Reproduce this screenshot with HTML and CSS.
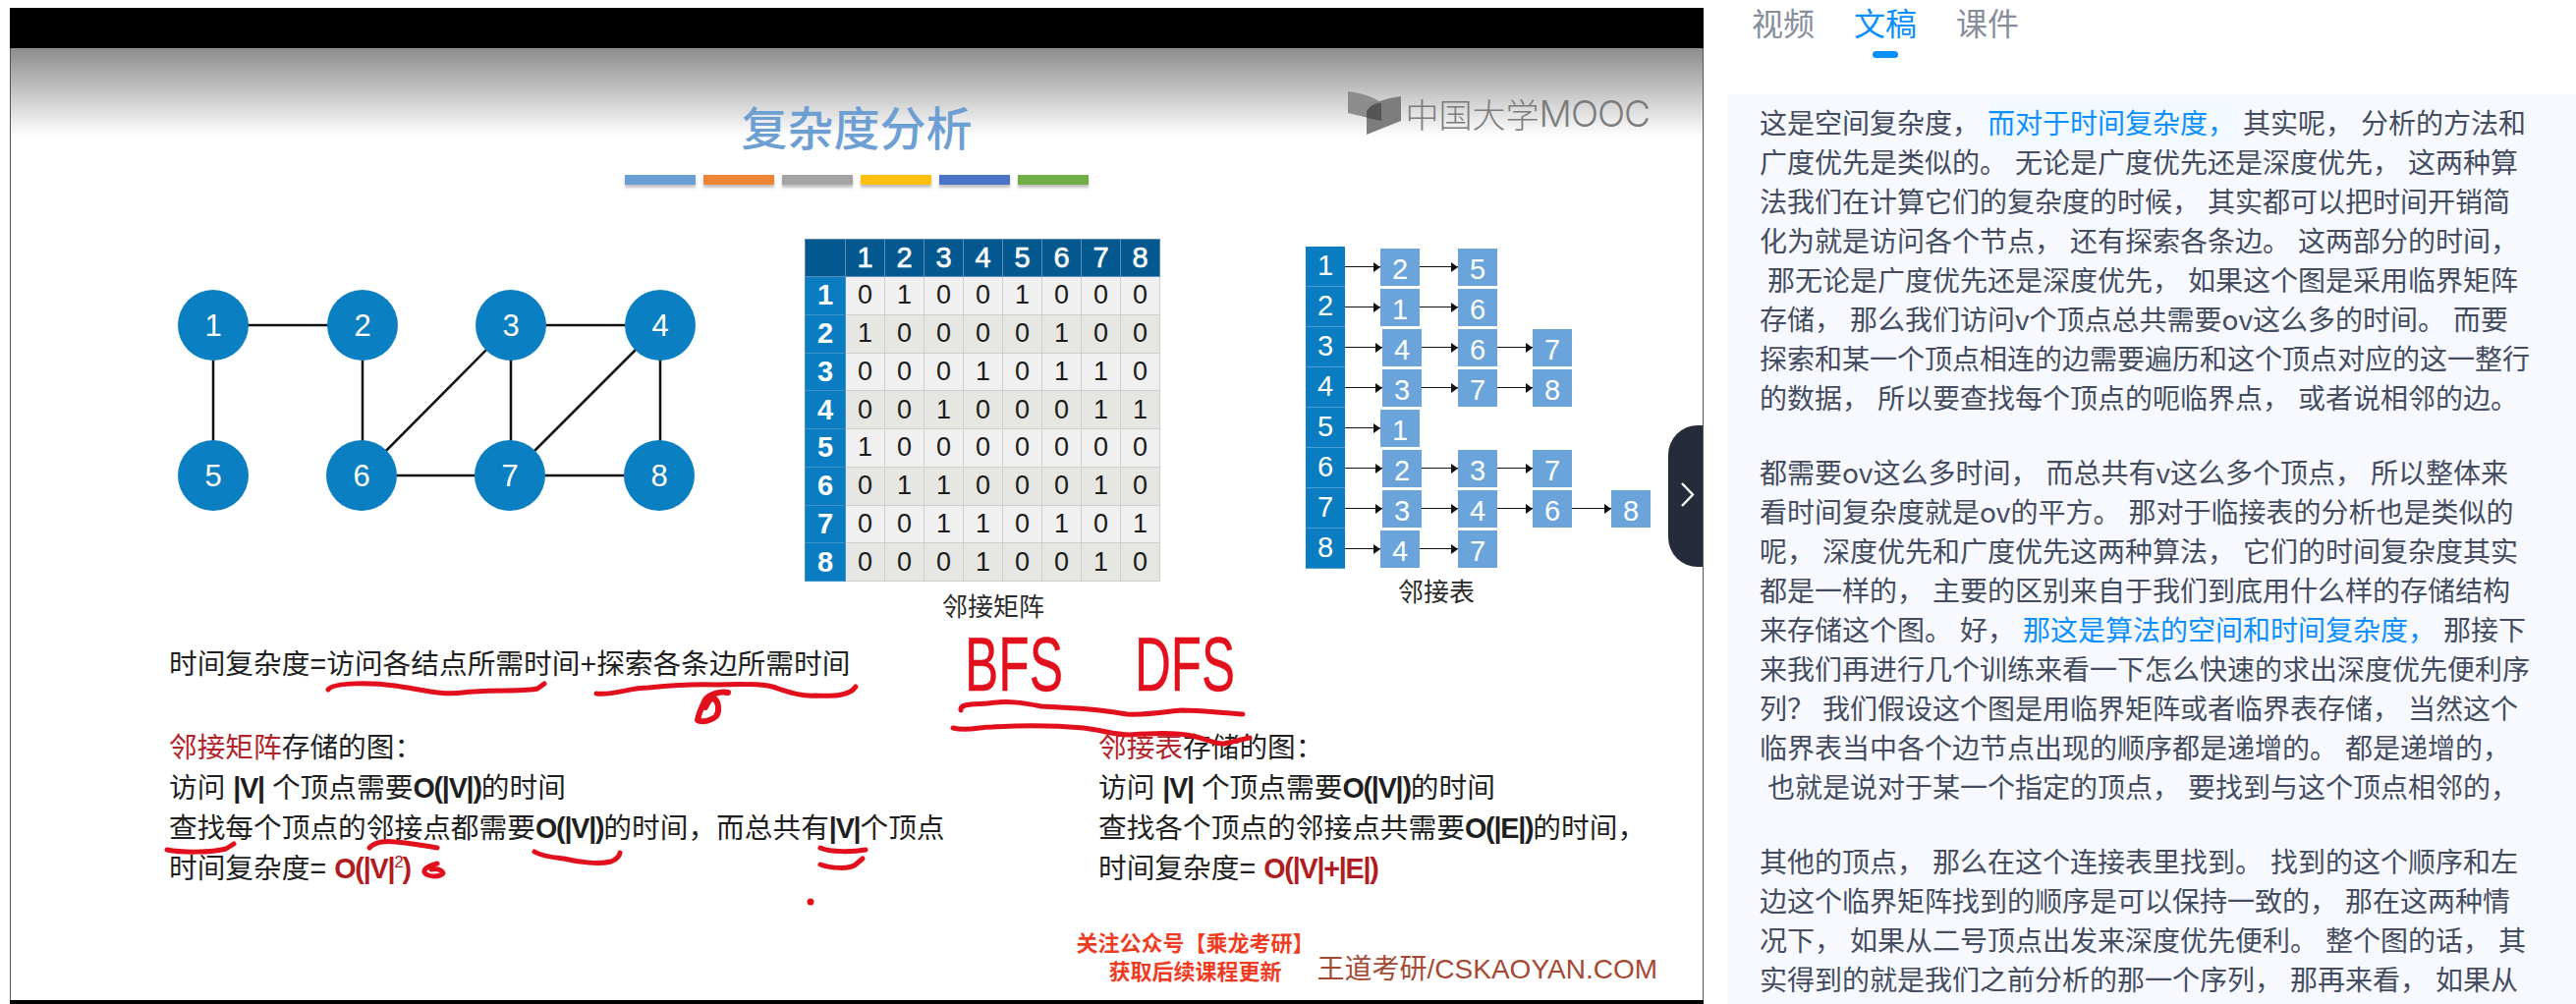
FILE: index.html
```html
<!DOCTYPE html>
<html lang="zh-CN">
  <head>
    <meta charset="UTF-8" />
    <title>复杂度分析</title>
    <link rel="stylesheet" href="styles.css">
  </head>
  <body>
    <main class="player">
      <div class="black-bar"></div>
      <div class="stage">
        <header class="slide-head">
          <span></span>
          <h1 class="slide-title">复杂度分析</h1>
          <div class="logo">
            <svg class="logo-mark" width="56" height="44" viewBox="0 0 56 44">
              <path d="M0 0 C14 2 26 5 34 12 L34 30 L0 22 Z" fill="#8c8c8c" />
              <path d="M19 20 C24 12 34 8 54 5 L54 30 L19 44 Z" fill="#7d7d7d" />
              <path d="M19 20 C23 14 28 12 34 12 L34 30 L19 27 Z" fill="#555" />
            </svg>
            <span class="logo-cn">中国大学</span><span class="logo-en">MOOC</span>
          </div>
        </header>
        <div class="ribbon">
          <i class="c-blue"></i><i class="c-orange"></i><i class="c-gray"></i>
          <i class="c-yellow"></i><i class="c-indigo"></i><i class="c-green"></i>
        </div>

        <section class="diagrams">
          <svg class="graph" width="560" height="240" viewBox="170 285 560 240">
            <g stroke="#111" stroke-width="2.5">
              <line x1="217" y1="330" x2="369" y2="330" />
              <line x1="520" y1="330" x2="672" y2="330" />
              <line x1="217" y1="330" x2="217" y2="483" />
              <line x1="369" y1="330" x2="369" y2="483" />
              <line x1="520" y1="330" x2="368" y2="483" />
              <line x1="520" y1="330" x2="520" y2="483" />
              <line x1="672" y1="330" x2="519" y2="483" />
              <line x1="672" y1="330" x2="672" y2="483" />
              <line x1="368" y1="483" x2="671" y2="483" />
            </g>
            <g fill="#0a7fc1">
              <circle cx="217" cy="330" r="36" />
              <circle cx="369" cy="330" r="36" />
              <circle cx="520" cy="330" r="36" />
              <circle cx="672" cy="330" r="36" />
              <circle cx="217" cy="483" r="36" />
              <circle cx="368" cy="483" r="36" />
              <circle cx="519" cy="483" r="36" />
              <circle cx="671" cy="483" r="36" />
            </g>
            <g class="graph-label">
              <text x="217" y="341">1</text>
              <text x="369" y="341">2</text>
              <text x="520" y="341">3</text>
              <text x="672" y="341">4</text>
              <text x="217" y="494">5</text>
              <text x="368" y="494">6</text>
              <text x="519" y="494">7</text>
              <text x="671" y="494">8</text>
            </g>
          </svg>

          <figure class="matrix-fig">
            <table class="matrix">
              <tr><th></th><th>1</th><th>2</th><th>3</th><th>4</th><th>5</th><th>6</th><th>7</th><th>8</th></tr>
              <tr><th>1</th><td>0</td><td>1</td><td>0</td><td>0</td><td>1</td><td>0</td><td>0</td><td>0</td></tr>
              <tr><th>2</th><td>1</td><td>0</td><td>0</td><td>0</td><td>0</td><td>1</td><td>0</td><td>0</td></tr>
              <tr><th>3</th><td>0</td><td>0</td><td>0</td><td>1</td><td>0</td><td>1</td><td>1</td><td>0</td></tr>
              <tr><th>4</th><td>0</td><td>0</td><td>1</td><td>0</td><td>0</td><td>0</td><td>1</td><td>1</td></tr>
              <tr><th>5</th><td>1</td><td>0</td><td>0</td><td>0</td><td>0</td><td>0</td><td>0</td><td>0</td></tr>
              <tr><th>6</th><td>0</td><td>1</td><td>1</td><td>0</td><td>0</td><td>0</td><td>1</td><td>0</td></tr>
              <tr><th>7</th><td>0</td><td>0</td><td>1</td><td>1</td><td>0</td><td>1</td><td>0</td><td>1</td></tr>
              <tr><th>8</th><td>0</td><td>0</td><td>0</td><td>1</td><td>0</td><td>0</td><td>1</td><td>0</td></tr>
            </table>
            <figcaption class="matrix-cap">邻接矩阵</figcaption>
          </figure>

          <figure class="list-fig">
            <div class="adj">
              <div class="adj-row"><b>1</b><i class="link"></i><span>2</span><i class="link"></i><span>5</span></div>
              <div class="adj-row"><b>2</b><i class="link"></i><span>1</span><i class="link"></i><span>6</span></div>
              <div class="adj-row shift"><b>3</b><i class="link"></i><span>4</span><i class="link"></i><span>6</span><i class="link"></i><span>7</span></div>
              <div class="adj-row shift"><b>4</b><i class="link"></i><span>3</span><i class="link"></i><span>7</span><i class="link"></i><span>8</span></div>
              <div class="adj-row"><b>5</b><i class="link"></i><span>1</span></div>
              <div class="adj-row shift"><b>6</b><i class="link"></i><span>2</span><i class="link"></i><span>3</span><i class="link"></i><span>7</span></div>
              <div class="adj-row shift"><b>7</b><i class="link"></i><span>3</span><i class="link"></i><span>4</span><i class="link"></i><span>6</span><i class="link"></i><span>8</span></div>
              <div class="adj-row"><b>8</b><i class="link"></i><span>4</span><i class="link"></i><span>7</span></div>
            </div>
            <figcaption class="list-cap">邻接表</figcaption>
          </figure>
        </section>

        <p class="formula">时间复杂度=访问各结点所需时间+探索各条边所需时间</p>

        <section class="notes">
          <div class="note-col">
            <p><em>邻接矩阵</em>存储的图：</p>
            <p>访问 <b>|V|</b> 个顶点需要<b>O(|V|)</b>的时间</p>
            <p>查找每个顶点的邻接点都需要<b>O(|V|)</b>的时间，而总共有<b>|V|</b>个顶点</p>
            <p>时间复杂度= <strong>O(|V|<sup>2</sup>)</strong></p>
          </div>
          <div class="note-col">
            <p><em>邻接表</em>存储的图：</p>
            <p>访问 <b>|V|</b> 个顶点需要<b>O(|V|)</b>的时间</p>
            <p>查找各个顶点的邻接点共需要<b>O(|E|)</b>的时间，</p>
            <p>时间复杂度= <strong>O(|V|+|E|)</strong></p>
          </div>
        </section>

        <footer class="slide-foot">
          <div class="promo">关注公众号【乘龙考研】<br>获取后续课程更新</div>
          <div class="brand">王道考研/CSKAOYAN.COM</div>
        </footer>

        <!-- pen marks drawn by the lecturer, in page coordinates -->
        <svg class="ink" viewBox="10 8 1724 1010">
          <g fill="none" stroke="#e2101c" stroke-width="5" stroke-linecap="round" stroke-linejoin="round">
            <path d="M334 702 C340 694 380 695 402 698 C430 702 450 708 471 705 C500 702 535 704 547 701 L554 696" />
            <path d="M607 706 C625 708 640 700 660 700 C690 697 710 696 729 697 C755 696 775 696 786 699 C805 705 815 709 830 708 C850 709 865 708 871 699" />
            <path d="M741 705 C733 703 722 707 718 712 C714 720 711 727 710 733 C716 736 725 733 729 729 C733 723 731 714 727 711 C722 710 720 716 718 720" stroke-width="6" />
            <path d="M170 865 C185 868 215 868 230 864 L238 859" />
            <path d="M376 863 C382 856 395 856 402 857 C418 858 432 861 445 863" />
            <path d="M544 867 C552 872 565 873 574 874 C590 878 610 880 622 877 C628 875 631 870 631 868" />
            <path d="M835 863 C845 868 870 867 881 865" />
            <path d="M835 880 C845 884 865 885 871 880 L878 874" />
            <path d="M445 879 C436 881 431 885 432 888 C434 892 446 894 451 889 C450 885 444 884 439 885" />
            <path d="M978 723 C977 716 990 717 1005 716 C1025 713 1040 715 1060 719 C1090 721 1110 720 1147 727 C1170 728 1190 724 1202 723 C1225 723 1245 726 1265 727" />
            <path d="M970 741 C985 745 995 740 1010 740 C1045 738 1080 739 1103 741 C1125 744 1135 748 1150 748 C1175 746 1200 746 1213 749 C1228 752 1238 758 1246 757 L1272 751" />
          </g>
          <circle cx="825" cy="918" r="3.5" fill="#e2101c" />
          <g class="ink-word">
            <text x="982" y="703" textLength="100" lengthAdjust="spacingAndGlyphs">BFS</text>
            <text x="1155" y="703" textLength="102" lengthAdjust="spacingAndGlyphs">DFS</text>
          </g>
        </svg>

        <button class="collapse" aria-label="收起">
          <svg width="16" height="27" viewBox="0 0 16 27">
            <path d="M2 2 L13 13.5 L2 25" fill="none" stroke="#fff" stroke-width="2.4" />
          </svg>
        </button>
      </div>
    </main>

    <aside class="side">
      <nav class="tabs">
        <a class="tab">视频</a>
        <a class="tab active">文稿</a>
        <a class="tab">课件</a>
      </nav>
      <div class="transcript">
        <p>这是空间复杂度， <span class="now">而对于时间复杂度，</span> 其实呢， 分析的方法和<br>
        广度优先是类似的。 无论是广度优先还是深度优先， 这两种算<br>
        法我们在计算它们的复杂度的时候， 其实都可以把时间开销简<br>
        化为就是访问各个节点， 还有探索各条边。 这两部分的时间，<br>
        &nbsp;那无论是广度优先还是深度优先， 如果这个图是采用临界矩阵<br>
        存储， 那么我们访问v个顶点总共需要ov这么多的时间。 而要<br>
        探索和某一个顶点相连的边需要遍历和这个顶点对应的这一整行<br>
        的数据， 所以要查找每个顶点的呃临界点， 或者说相邻的边。</p>
        <p>都需要ov这么多时间， 而总共有v这么多个顶点， 所以整体来<br>
        看时间复杂度就是ov的平方。 那对于临接表的分析也是类似的<br>
        呢， 深度优先和广度优先这两种算法， 它们的时间复杂度其实<br>
        都是一样的， 主要的区别来自于我们到底用什么样的存储结构<br>
        来存储这个图。 好， <span class="mark">那这是算法的空间和时间复杂度，</span> 那接下<br>
        来我们再进行几个训练来看一下怎么快速的求出深度优先便利序<br>
        列？ 我们假设这个图是用临界矩阵或者临界表存储， 当然这个<br>
        临界表当中各个边节点出现的顺序都是递增的。 都是递增的，<br>
        &nbsp;也就是说对于某一个指定的顶点， 要找到与这个顶点相邻的，</p>
        <p>其他的顶点， 那么在这个连接表里找到。 找到的这个顺序和左<br>
        边这个临界矩阵找到的顺序是可以保持一致的， 那在这两种情<br>
        况下， 如果从二号顶点出发来深度优先便利。 整个图的话， 其<br>
        实得到的就是我们之前分析的那一个序列， 那再来看， 如果从</p>
      </div>
    </aside>
  </body>
</html>
```

FILE: styles.css
```css
* {
  box-sizing: border-box;
}

html,
body {
  height: 100%;
}

body {
  margin: 0;
  padding: 8px 0 0 10px;
  display: flex;
  overflow: hidden;
  background: #fff;
  font-family: "Liberation Sans", "Noto Sans CJK SC", sans-serif;
}

p,
h1,
figure {
  margin: 0;
}

/* video side */
.player {
  width: 1724px;
  height: 1014px;
  flex: none;
  display: flex;
  flex-direction: column;
  background: #000;
  padding-bottom: 4px;
}

.black-bar {
  height: 41px;
  flex: none;
}

.stage {
  position: relative;
  flex: 1;
  display: flex;
  flex-direction: column;
  overflow: hidden;
  border-left: 1px solid #555;
  border-right: 1px solid #555;
  background: linear-gradient(#8c8c8c, #fff) no-repeat top / 100% 90px, #fff;
}

.slide-head {
  display: grid;
  grid-template-columns: 1fr auto 1fr;
  padding-top: 49px;
}

.slide-title {
  font-size: 47px;
  line-height: 60px;
  font-weight: 500;
  color: #6d9fd3;
  font-family: "Noto Sans CJK SC", sans-serif;
}

.logo {
  justify-self: end;
  margin: -5px 54px 0 0;
  height: 44px;
  display: flex;
  align-items: center;
  color: #7c7c7c;
}

.logo-mark {
  margin-right: 3px;
}

.logo-cn {
  font-family: "Noto Sans CJK SC", sans-serif;
  font-weight: 300;
  font-size: 34px;
}

.logo-en {
  font-family: "Inter", sans-serif;
  font-weight: 300;
  font-size: 37px;
  letter-spacing: -1px;
}

.ribbon {
  display: flex;
  justify-content: center;
  gap: 8px;
  margin-top: 20px;
}

.ribbon i {
  width: 72px;
  height: 10px;
  box-shadow: 0 3px 3px rgba(0, 0, 0, 0.25);
}

.c-blue { background: #6a9fd6; }
.c-orange { background: #ee8436; }
.c-gray { background: #a5a5a5; }
.c-yellow { background: #fdc010; }
.c-indigo { background: #4a74c6; }
.c-green { background: #70ad47; }

/* graph, matrix and list */
.diagrams {
  display: flex;
  align-items: flex-start;
  height: 394px;
  margin-top: 55px;
  padding-left: 159px;
}

.graph {
  flex: none;
  margin-top: 43px;
}

.graph-label text {
  fill: #fff;
  font-size: 31px;
  text-anchor: middle;
}

.matrix-fig {
  margin-left: 89px;
}

.matrix {
  border-collapse: collapse;
  table-layout: fixed;
  width: 362px;
  height: 349px;
  font-size: 27px;
  text-align: center;
}

.matrix th,
.matrix td {
  padding: 0;
  border: 1px solid #cfcfcf;
}

.matrix tr:first-child {
  height: 38px;
}

.matrix tr:first-child th {
  background: #03598f;
  border-color: #5b8fb5;
  color: #fff;
  font-weight: 400;
  -webkit-text-stroke: 0.6px #fff;
}

.matrix th {
  background: #0a7dc2;
  border-color: #3f90c8;
  color: #fff;
  font-size: 29px;
  font-weight: 700;
}

.matrix tr th:first-child {
  width: 41px;
}

.matrix td {
  color: #1c1c1c;
  background: #f0f0f0;
}

.matrix tr:nth-child(odd) td {
  background: #e6e6e3;
}

.matrix-cap,
.list-cap {
  font-family: "Noto Sans CJK SC", sans-serif;
  font-size: 26px;
  line-height: 36px;
  color: #2b2b2b;
}

.matrix-cap {
  margin: 6px 0 0 140px;
}

.list-fig {
  margin: 8px 0 0 148px;
}

.adj-row {
  display: flex;
  align-items: center;
  height: 41px;
}

.adj-row b,
.adj-row span {
  flex: none;
  width: 40px;
  color: #fff;
  font-size: 29px;
  font-weight: 400;
  text-align: center;
}

.adj-row b {
  height: 41px;
  line-height: 39px;
  background: #0a7dc2;
  border-bottom: 1px solid #4a9ed4;
}

.adj-row span {
  height: 38px;
  line-height: 42px;
  background: #6aa4da;
}

.link {
  position: relative;
  flex: none;
  width: 39px;
  height: 1.5px;
  background: #111;
}

.link::after {
  content: "";
  position: absolute;
  right: 0;
  top: -4px;
  border-left: 7px solid #111;
  border-top: 5px solid transparent;
  border-bottom: 5px solid transparent;
}

.adj-row .link:nth-of-type(1) {
  width: 36px;
}

.adj-row .link:nth-of-type(3) {
  width: 36px;
}

.adj-row .link:nth-of-type(4) {
  width: 40px;
}

.shift .link:nth-of-type(1) {
  width: 38px;
}

.shift .link:nth-of-type(2) {
  width: 37px;
}

.list-cap {
  margin: 4px 0 0 94px;
}

/* text of the slide */
.formula,
.notes {
  font-size: 28.7px;
  color: #1f1f1f;
  white-space: nowrap;
  padding-left: 161px;
}

.formula {
  line-height: 40px;
  margin-top: 19px;
}

.notes {
  display: flex;
  margin-top: 45px;
  line-height: 41px;
}

.note-col:first-child {
  width: 946px;
}

.notes em {
  font-style: normal;
  color: #b3242a;
}

.notes b {
  font-weight: 700;
  letter-spacing: -1.2px;
}

.notes strong {
  color: #b01c20;
  font-weight: 700;
  letter-spacing: -1.2px;
}

.notes sup {
  font-size: 17px;
  font-weight: 400;
  line-height: 0;
}

.slide-foot {
  margin-top: auto;
  display: flex;
  justify-content: flex-end;
  align-items: flex-end;
  padding: 0 46px 13px 0;
  white-space: nowrap;
}

.promo {
  font-family: "Noto Sans CJK SC", sans-serif;
  font-size: 22px;
  line-height: 29px;
  font-weight: 700;
  text-align: center;
  color: #ef3b1f;
  margin-bottom: 3px;
}

.brand {
  margin-left: 3px;
  font-size: 28px;
  line-height: 36px;
  color: #a44a33;
}

/* lies over the slide */
.ink {
  position: absolute;
  inset: -41px 0 0 -1px;
  width: 1724px;
  height: 1010px;
  pointer-events: none;
}

.ink-word text {
  fill: #e2101c;
  stroke: #e2101c;
  stroke-width: 0.4px;
  font-size: 78px;
}

.collapse {
  position: absolute;
  right: 0;
  top: 384px;
  width: 35px;
  height: 144px;
  padding: 0 0 0 4px;
  border: 0;
  border-radius: 30px 0 0 30px;
  background: #252b3a;
}

/* transcript side */
.side {
  flex: 1;
  min-width: 0;
  margin: -8px 0 0 24px;
  display: flex;
  flex-direction: column;
  font-family: "Noto Sans CJK SC", sans-serif;
}

.tabs {
  flex: none;
  height: 96px;
  display: flex;
  gap: 40px;
  padding-left: 25px;
}

.tab {
  position: relative;
  height: 44px;
  font-size: 32px;
  line-height: 44px;
  color: #868e9c;
}

.tab.active {
  color: #0a8fff;
}

.tab.active::after {
  content: "";
  position: absolute;
  left: 19px;
  top: 52px;
  width: 26px;
  height: 7px;
  border-radius: 4px;
  background: #0a8fff;
}

.transcript {
  flex: 1;
  overflow: hidden;
  padding: 8px 0 0 33px;
  background: #f7f9fe;
  font-size: 28px;
  line-height: 40px;
  word-spacing: 1.7px;
  color: #434c60;
  white-space: nowrap;
}

.transcript p + p {
  margin-top: 36px;
}

.now {
  padding: 1px 0;
  background: #f2f9ff;
  color: #0a8fff;
}

.mark {
  color: #0a8fff;
}
```
